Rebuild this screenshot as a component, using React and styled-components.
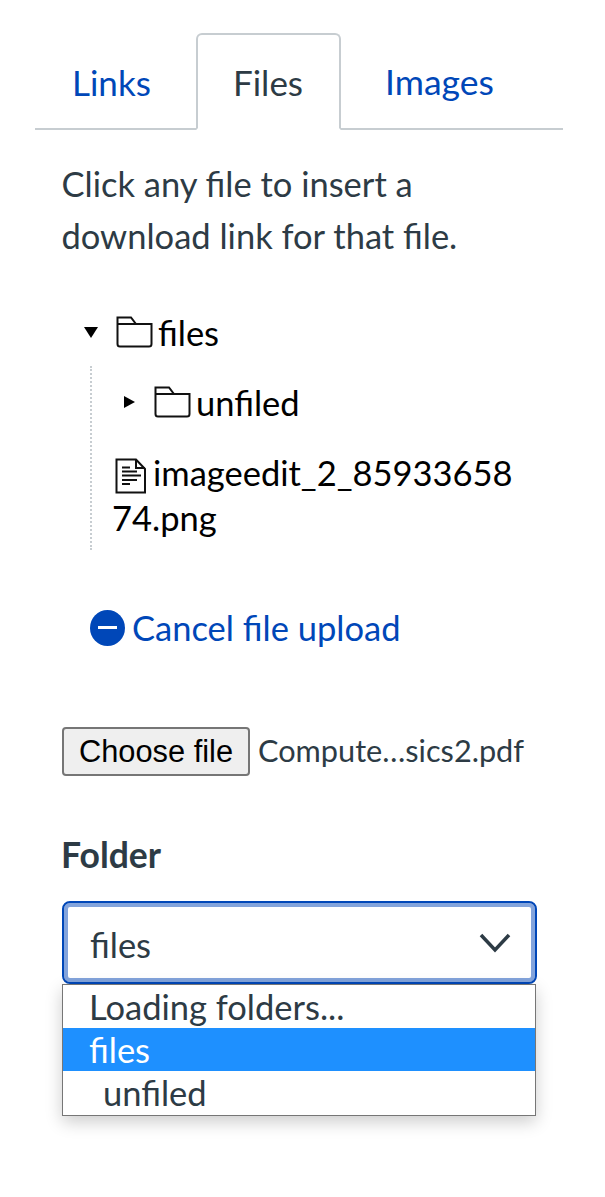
import React from 'react';
import styled, { createGlobalStyle } from 'styled-components';

const GlobalStyle = createGlobalStyle`
  html, body {
    margin: 0;
    padding: 0;
    background: #fff;
    font-family: Lato, "Noto Sans", sans-serif;
    color: #2d3b45;
  }
`;

const TABS = [
  { name: 'Links' },
  { name: 'Files', active: true },
  { name: 'Images' },
];

const FOLDER_OPTIONS = [
  { name: 'Loading folders...' },
  { name: 'files', selected: true },
  { name: 'unfiled', nested: true },
];

const FolderIcon = () => (
  <svg width="37" height="32" viewBox="0 0 37 32" fill="none" stroke="#111" strokeWidth="2">
    <path d="M1.500 28V1.500H15L20 8H35.500V28a2.500 2.500 0 0 1-2.500 2.500H4A2.500 2.500 0 0 1 1.500 28zM1.500 8H20" />
  </svg>
);

const FileIcon = () => (
  <svg width="31" height="36" viewBox="0 0 31 36" fill="none" stroke="#111" strokeWidth="2">
    <path d="M1.500 1.500H21L30 11V34.500H1.500zM21 1.500V10H30" />
    <path d="M7 9.500h8M7 13.500h15M7 17.500h19M7 22h15M7 26h8" />
  </svg>
);

const App = () => (
  <Page>
    <GlobalStyle />
    <Tabs>
      {TABS.map(tab => (
        <Tab key={tab.name} active={tab.active}>
          {tab.name}
        </Tab>
      ))}
    </Tabs>
    <Intro>Click any file to insert a download link for that file.</Intro>
    <Tree>
      <TreeRow>
        <Caret open />
        <FolderIcon />
        <TreeLabel>files</TreeLabel>
      </TreeRow>
      <Branch>
        <TreeRow nested>
          <Caret />
          <FolderIcon />
          <TreeLabel>unfiled</TreeLabel>
        </TreeRow>
        <FileRow>
          <FileIconSlot>
            <FileIcon />
          </FileIconSlot>
          imageedit_2_8593365874.png
        </FileRow>
      </Branch>
    </Tree>
    <CancelLink>
      <CancelIcon />
      Cancel file upload
    </CancelLink>
    <Picker>
      <ChooseButton>Choose file</ChooseButton>
      <FileName>Compute…sics2.pdf</FileName>
    </Picker>
    <FieldLabel>Folder</FieldLabel>
    <SelectWrap>
      <SelectBox>
        <SelectValue>files</SelectValue>
        <svg width="32" height="20" viewBox="0 0 32 20" fill="none" stroke="#2d3b45" strokeWidth="3.500">
          <path d="M2 2l14 15L30 2" />
        </svg>
      </SelectBox>
      <Menu>
        {FOLDER_OPTIONS.map(option => (
          <MenuItem key={option.name} selected={option.selected} nested={option.nested}>
            {option.name}
          </MenuItem>
        ))}
      </Menu>
    </SelectWrap>
  </Page>
);

const Page = styled.div`
  width: 605px;
  height: 1197px;
  box-sizing: border-box;
  padding: 33px 42px 0 35px;
  overflow: hidden;
  font-size: 34.500px;
`;

const Tabs = styled.div`
  display: flex;
  padding-left: 161px;
  position: relative;
  height: 95px;
  border-bottom: 2px solid #c7cdd1;
`;

const Tab = styled.div`
  box-sizing: border-box;
  height: 97px;
  padding: 27px 36px 0 35px;
  line-height: 40px;
  font-size: 35px;
  color: ${props => (props.active ? '#2d3b45' : '#0047b8')};
  border: 2px solid ${props => (props.active ? '#c7cdd1' : 'transparent')};
  border-bottom-color: ${props => (props.active ? '#fff' : 'transparent')};
  border-radius: 6px 6px 0 0;
  background: ${props => (props.active ? '#fff' : 'transparent')};
  &:first-child {
    position: absolute;
    left: 0;
  }
  &:last-child {
    margin-left: 7px;
    font-size: 35.500px;
  }
`;

const Intro = styled.p`
  margin: 28px 0 0 26.500px;
  width: 430px;
  line-height: 52px;
`;

const Tree = styled.div`
  margin: 48px 0 0 49px;
  color: #000;
`;

const TreeRow = styled.div`
  display: flex;
  align-items: center;
  height: 44px;
  margin-left: ${props => (props.nested ? '32px' : '0')};
`;

const Caret = styled.span`
  width: 0;
  height: 0;
  border-style: solid;
  ${props =>
    props.open
      ? `
    border-width: 11px 7px 0;
    border-color: #000 transparent transparent;
    margin-right: 18px;
  `
      : `
    border-width: 6.500px 0 6.500px 11px;
    border-color: transparent transparent transparent #000;
    margin: 0 19px 0 0;
  `}
`;

const TreeLabel = styled.span`
  margin-left: 5px;
`;

const Branch = styled.div`
  margin: 12px 0 0 6px;
  padding: 14px 0 0 0;
  border-left: 2px dotted #c7cdd1;
  height: 170px;
`;

const FileRow = styled.div`
  width: 412px;
  margin: 26px 0 0 20px;
  line-height: 45px;
  word-break: break-all;
`;

const FileIconSlot = styled.span`
  display: inline-block;
  width: 31px;
  height: 24px;
  margin: 0 7px 0 3px;
  vertical-align: -4px;
  svg {
    display: block;
    margin-top: -8px;
  }
`;

const CancelLink = styled.div`
  display: flex;
  align-items: center;
  gap: 7px;
  margin: 58px 0 0 55px;
  color: #0047b8;
  line-height: 40px;
`;

const CancelIcon = styled.span`
  position: relative;
  display: block;
  width: 35px;
  height: 36px;
  border-radius: 50%;
  background: #0047b8;
  &::after {
    content: '';
    position: absolute;
    left: 8px;
    right: 8px;
    top: 16px;
    height: 3px;
    background: #fff;
  }
`;

const Picker = styled.div`
  display: flex;
  align-items: center;
  gap: 8px;
  margin: 79px 0 0 27px;
`;

const ChooseButton = styled.button`
  box-sizing: border-box;
  width: 188px;
  height: 49px;
  padding: 0;
  border: 2px solid #767676;
  border-radius: 4px;
  background: #efefef;
  color: #000;
  font-family: "Liberation Sans", Arial, sans-serif;
  font-size: 30.800px;
`;

const FileName = styled.span`
  padding-bottom: 2px;
  font-size: 30.700px;
`;

const FieldLabel = styled.div`
  margin: 59px 0 0 26px;
  font-weight: 700;
  font-size: 35.500px;
  line-height: 40px;
`;

const SelectWrap = styled.div`
  position: relative;
  width: 475px;
  margin: 26px 0 0 27px;
`;

const SelectBox = styled.div`
  display: flex;
  align-items: center;
  justify-content: space-between;
  box-sizing: border-box;
  height: 83px;
  padding: 0 24px 0 26px;
  background: #fff;
  border: 2px solid #0047b8;
  box-shadow: inset 0 0 0 4px #83a4dc;
  border-radius: 8px;
`;

const SelectValue = styled.span`
  padding-top: 3px;
`;

const Menu = styled.div`
  position: absolute;
  top: 83px;
  left: 0;
  width: 474px;
  box-sizing: border-box;
  background: #fff;
  border: 1px solid #767676;
  box-shadow: 0 6px 16px rgba(0, 0, 0, 0.2);
`;

const MenuItem = styled.div`
  height: ${props => (props.nested ? '44px' : '43px')};
  line-height: 43px;
  padding-left: ${props => (props.nested ? '40px' : '26px')};
  background: ${props => (props.selected ? '#1e90ff' : 'transparent')};
  color: ${props => (props.selected ? '#fff' : '#2d3b45')};
`;

export default App;
